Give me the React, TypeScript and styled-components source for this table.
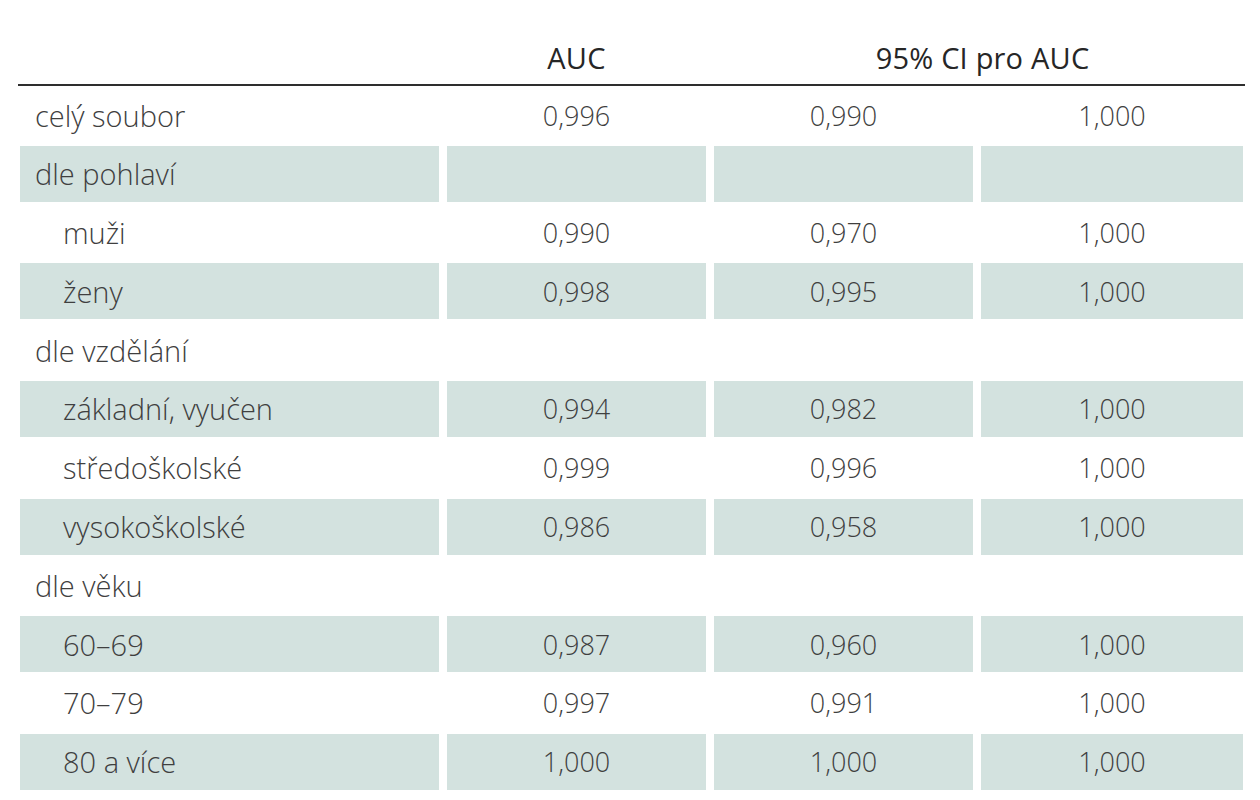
import React from 'react';
import styled, { createGlobalStyle } from 'styled-components';

const GlobalStyle = createGlobalStyle`
  html, body {
    margin: 0;
    padding: 0;
    background: #ffffff;
  }
  body {
    font-family: 'Open Sans', 'Liberation Sans', sans-serif;
  }
`;

// one row of the table
interface Row {
  label: string;
  indent?: boolean;
  auc?: string;
  low?: string;
  high?: string;
}

const rows: Row[] = [
  { label: 'celý soubor', auc: '0,996', low: '0,990', high: '1,000' },
  { label: 'dle pohlaví' },
  { label: 'muži', indent: true, auc: '0,990', low: '0,970', high: '1,000' },
  { label: 'ženy', indent: true, auc: '0,998', low: '0,995', high: '1,000' },
  { label: 'dle vzdělání' },
  { label: 'základní, vyučen', indent: true, auc: '0,994', low: '0,982', high: '1,000' },
  { label: 'středoškolské', indent: true, auc: '0,999', low: '0,996', high: '1,000' },
  { label: 'vysokoškolské', indent: true, auc: '0,986', low: '0,958', high: '1,000' },
  { label: 'dle věku' },
  { label: '60–69', indent: true, auc: '0,987', low: '0,960', high: '1,000' },
  { label: '70–79', indent: true, auc: '0,997', low: '0,991', high: '1,000' },
  { label: '80 a více', indent: true, auc: '1,000', low: '1,000', high: '1,000' },
];

const COLUMNS = '419px 259px 259px 262px';

const Page = styled.div`
  padding: 28px 15px 0 18px;
  width: 1227px;
`;

const HeaderRow = styled.div`
  display: grid;
  grid-template-columns: 421px 259px 537px;
  column-gap: 8px;
  height: 56px;
  align-items: center;
  border-bottom: 2px solid #2e2e2e;
`;

const HeaderCell = styled.div`
  font-size: 29px;
  font-weight: 400;
  color: #262626;
  text-align: center;
  padding-top: 2px;
  letter-spacing: 0.2px;
`;

const Body = styled.div`
  display: grid;
  grid-template-columns: ${COLUMNS};
  column-gap: 8px;
  row-gap: 2.8px;
  margin-left: 2px;
  padding-top: 1px;
`;

const Cell = styled.div<{ $shaded: boolean; $label?: boolean; $indent?: boolean }>`
  height: 56px;
  display: flex;
  align-items: center;
  justify-content: ${p => (p.$label ? 'flex-start' : 'center')};
  padding-left: ${p => (p.$label ? (p.$indent ? '43px' : '15px') : '0')};
  background: ${p => (p.$shaded ? '#d3e2df' : 'transparent')};
  font-size: ${p => (p.$label ? '29px' : '27px')};
  font-weight: 300;
  color: #3f3f3f;
  white-space: nowrap;
`;

const App = () => (
  <>
    <GlobalStyle />
    <Page>
      <HeaderRow>
        <HeaderCell />
        <HeaderCell>AUC</HeaderCell>
        <HeaderCell>95% CI pro AUC</HeaderCell>
      </HeaderRow>
      <Body>
        {rows.map((row, i) => {
          const shaded = i % 2 === 1;
          return (
            <React.Fragment key={row.label}>
              <Cell $shaded={shaded} $label $indent={row.indent}>
                {row.label}
              </Cell>
              <Cell $shaded={shaded}>{row.auc}</Cell>
              <Cell $shaded={shaded}>{row.low}</Cell>
              <Cell $shaded={shaded}>{row.high}</Cell>
            </React.Fragment>
          );
        })}
      </Body>
    </Page>
  </>
);

export default App;
